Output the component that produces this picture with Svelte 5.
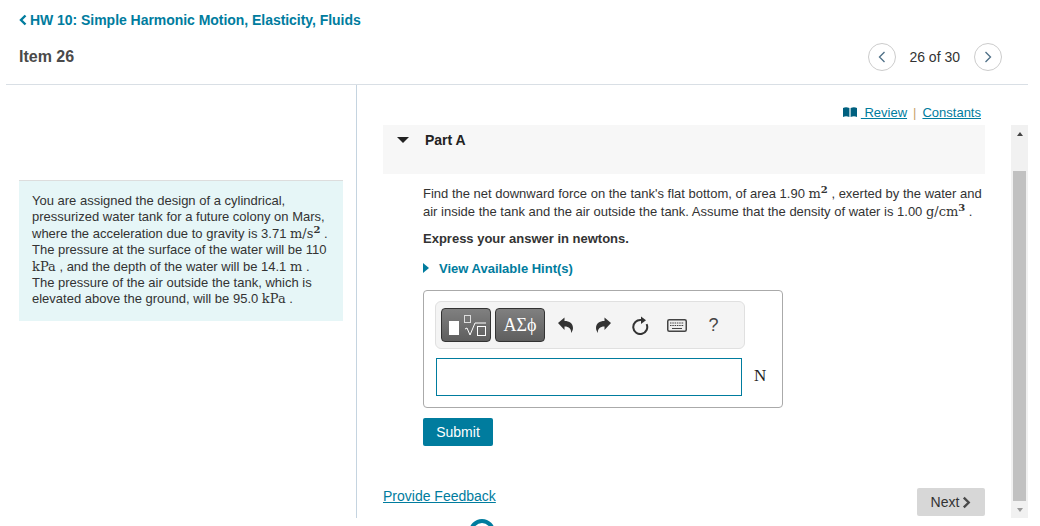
<script lang="ts">
  const tools = ['undo', 'redo', 'reset', 'keyboard'];
</script>

<div class="page">
  <header class="top">
    <a class="crumb" href="#top">
      <svg class="crumb-icon" viewBox="0 0 9 12" width="9" height="12"><path d="M7.500 1.500 3 6l4.500 4.500" fill="none" stroke="currentColor" stroke-width="2.400" /></svg>
      <span>HW 10: Simple Harmonic Motion, Elasticity, Fluids</span>
    </a>
    <div class="item-row">
      <h1>Item 26</h1>
      <div class="pager">
        <button class="round" aria-label="Previous">
          <svg viewBox="0 0 12 16" width="10" height="14"><path d="M9 2 3 8l6 6" fill="none" stroke="#4f7087" stroke-width="1.600" /></svg>
        </button>
        <span>26 of 30</span>
        <button class="round" aria-label="Next item">
          <svg viewBox="0 0 12 16" width="10" height="14"><path d="m3 2 6 6-6 6" fill="none" stroke="#4f7087" stroke-width="1.600" /></svg>
        </button>
      </div>
    </div>
  </header>

  <main class="split">
    <aside class="left">
      <div class="intro">
        You are assigned the design of a cylindrical,<br />
        pressurized water tank for a future colony on Mars,<br />
        where the acceleration due to gravity is 3.71 <span class="m">m/s<sup>2</sup></span> .<br />
        The pressure at the surface of the water will be 110<br />
        <span class="m">kPa</span> , and the depth of the water will be 14.1 <span class="m">m</span> .<br />
        The pressure of the air outside the tank, which is<br />
        elevated above the ground, will be 95.0 <span class="m">kPa</span> .
      </div>
    </aside>

    <section class="right">
      <div class="links">
        <svg viewBox="0 0 14 10" width="14" height="10"><path d="M0 1c2-1 4-1 6.400 0v9C4 9 2 9 0 10zM7.600 1C10 0 12 0 14 1v9c-2-1-4-1-6.400 0z" fill="#00607f" /></svg>
        <a href="#review">&nbsp;Review</a>
        <span class="sep">|</span>
        <a href="#constants">Constants</a>
      </div>

      <div class="pane">
        <div class="content">
          <div class="part-head">
            <span class="tri-down"></span>
            <strong>Part A</strong>
          </div>

          <div class="body">
            <p class="question">
              Find the net downward force on the tank's flat bottom, of area 1.90 <span class="m">m<sup>2</sup></span> , exerted by the water and<br />
              air inside the tank and the air outside the tank. Assume that the density of water is 1.00 <span class="m">g/cm<sup>3</sup></span> .
            </p>
            <p class="express">Express your answer in newtons.</p>
            <a class="hint" href="#hint"><span class="tri-right"></span>View Available Hint(s)</a>

            <div class="answer">
              <div class="toolbar">
                <button class="tpl" aria-label="Templates">
                  <svg viewBox="0 0 50 34" width="50" height="34">
                    <rect x="8" y="13" width="10" height="14" fill="#fff" />
                    <rect x="23.500" y="7.500" width="6" height="7" fill="none" stroke="#ddd" />
                    <path d="M24 21l2-1 3 7 5-12h11" fill="none" stroke="#fff" />
                    <rect x="36.500" y="18.500" width="8" height="9" fill="none" stroke="#fff" />
                  </svg>
                </button>
                <button class="tpl greek">ΑΣϕ</button>
                <div class="tools">
                  {#each tools as t}
                    <span class="tool">
                      {#if t === 'undo'}
                        <svg viewBox="0 0 16 17" width="16" height="17"><path d="M0 6 6.500.5v3.600c5 0 8.500 2.500 8.500 7 0 2-1 3.900-2 4.900.6-4-2-6.500-6.500-6.500v3.500z" fill="#333" /></svg>
                      {:else if t === 'redo'}
                        <svg viewBox="0 0 16 17" width="16" height="17"><path d="M16 6 9.500.5v3.600c-5 0-8.500 2.500-8.500 7 0 2 1 3.900 2 4.900-.6-4 2-6.500 6.500-6.500v3.500z" fill="#333" /></svg>
                      {:else if t === 'reset'}
                        <svg viewBox="0 0 18 19" width="18" height="19"><path d="M10 4.100a7 7 0 1 0 5.600 4" fill="none" stroke="#333" stroke-width="2" /><path d="M10 .5v7.500l5-3.700z" fill="#333" /></svg>
                      {:else}
                        <svg viewBox="0 0 20 13" width="20" height="13"><rect x=".75" y=".75" width="18.500" height="11.500" rx="1.500" fill="#eee" stroke="#444" stroke-width="1.500" /><path d="M3 4h14M3 6.500h14" stroke="#444" stroke-dasharray="1.500 .8" /><path d="M5 9.500h10" stroke="#444" /></svg>
                      {/if}
                    </span>
                  {/each}
                  <span class="tool help">?</span>
                </div>
              </div>
              <div class="entry">
                <input type="text" aria-label="Answer" />
                <span class="unit">N</span>
              </div>
            </div>

            <button class="submit">Submit</button>
          </div>

          <div class="foot">
            <a class="feedback" href="#feedback">Provide Feedback</a>
            <button class="next">Next <svg viewBox="0 0 10 14" width="9" height="13"><path d="M2 1.500 7.500 7 2 12.500" fill="none" stroke="#4a4a4a" stroke-width="2.600" /></svg></button>
          </div>
        </div>

        <div class="scrollbar">
          <span class="arrow-up"></span>
          <span class="thumb"></span>
          <span class="arrow-down"></span>
        </div>
      </div>
    </section>
  </main>

  <span class="fab"></span>
</div>

<style>
  :global(body) { margin: 0; background: #fff; overflow: hidden; }

  .page {
    position: relative;
    width: 1040px;
    height: 526px;
    overflow: hidden;
    font-family: "Liberation Sans", Arial, sans-serif;
    font-size: 14px;
    color: #333;
  }

  a { color: #007c9e; }

  .top { padding: 0 12px 0 6px; }
  .crumb {
    display: flex;
    align-items: center;
    height: 40px;
    padding-left: 12px;
    font-weight: 700;
    letter-spacing: -.04px;
    text-decoration: none;
  }
  .crumb-icon { margin-right: 3px; }

  .item-row {
    display: flex;
    align-items: center;
    justify-content: space-between;
    height: 32px;
    padding: 0 26px 12px 13px;
    border-bottom: 1px solid #d9dfe5;
  }
  h1 { margin: 1px 0 0; font-size: 16px; font-weight: 700; color: #4a4a4a; }

  .pager { display: flex; align-items: center; gap: 13px; margin-top: 2px; }
  .round {
    display: flex;
    align-items: center;
    justify-content: center;
    width: 28px;
    height: 28px;
    padding: 0;
    background: #fff;
    border: 1px solid #ccc;
    border-radius: 50%;
  }
  .pager span { margin-right: 1px; }

  .split { display: flex; height: 433px; padding-left: 6px; }

  .left { width: 350px; border-right: 1px solid #c5d4e0; padding-top: 95px; }
  .intro {
    width: 311px;
    height: 128px;
    margin-left: 13px;
    padding: 12px 0 0 13px;
    background: #e6f6f7;
    border-top: 1px solid #ddd;
    line-height: 16.400px;
    font-size: 13px;
  }

  .m { font-family: "DejaVu Serif", serif; font-size: 13px; }
  sup { font-size: 10px; font-weight: 700; line-height: 0; }

  .right { flex: 1; padding-left: 26px; padding-right: 12px; }
  .links {
    display: flex;
    justify-content: flex-end;
    align-items: center;
    gap: 4px;
    height: 40px;
    padding: 14px 47px 0 0;
    box-sizing: border-box;
    font-size: 13px;
  }
  .sep { color: #c9a26c; margin: 0 2px; }

  .pane { display: flex; height: 393px; }
  .content { display: flex; flex-direction: column; width: 602px; margin-right: 26px; }

  .part-head {
    display: flex;
    align-items: flex-start;
    gap: 16px;
    flex: none;
    height: 49px;
    padding: 7px 0 0 14px;
    box-sizing: border-box;
    background: #f7f7f7;
    color: #222;
  }
  .tri-down {
    margin-top: 5px;
    border-left: 6px solid transparent;
    border-right: 6px solid transparent;
    border-top: 6px solid #222;
  }

  .body { padding-left: 40px; }
  .question { margin: 11px 0 0; line-height: 18px; font-size: 13px; white-space: nowrap; }
  .express { margin: 10px 0 0; font-size: 13px; font-weight: 700; }
  .hint { display: block; margin-top: 15px; font-size: 13px; font-weight: 700; text-decoration: none; }
  .tri-right {
    display: inline-block;
    margin-right: 10px;
    border-top: 5px solid transparent;
    border-bottom: 5px solid transparent;
    border-left: 6px solid #007c9e;
  }

  .answer {
    width: 347px;
    height: 106px;
    margin-top: 14px;
    padding: 10px 0 0 11px;
    border: 1px solid #aaa;
    border-radius: 4px;
  }
  .toolbar {
    display: flex;
    align-items: center;
    gap: 4px;
    width: 298px;
    height: 46px;
    padding: 0 5px;
    background: #f4f4f4;
    border: 1px solid #e0e0e0;
    border-radius: 6px;
  }
  .tpl {
    width: 50px;
    height: 34px;
    padding: 0;
    background: linear-gradient(#808080, #5e5e5e);
    border: 1px solid #333;
    border-radius: 4px;
    color: #fff;
    font-family: "Liberation Serif", serif;
    font-size: 18px;
    overflow: hidden;
  }
  .tpl svg { display: block; margin: -1px; }
  .tools { display: flex; align-items: center; margin-left: -2px; }
  .tool { display: flex; justify-content: center; align-items: center; width: 37px; }
  .help { font-size: 18px; color: #444; }

  .entry { display: flex; align-items: center; margin: 9px 0 0 1px; }
  input {
    width: 306px;
    height: 38px;
    padding: 0;
    box-sizing: border-box;
    border: 1px solid #007c9e;
    background: #fff;
  }
  .unit { margin: 0 0 2px 12px; font-family: "Liberation Serif", serif; font-size: 17px; color: #222; }

  .submit {
    display: block;
    width: 70px;
    height: 28px;
    margin-top: 10px;
    padding: 0;
    background: #007c9e;
    border: none;
    border-radius: 2px;
    color: #fff;
    font: inherit;
  }

  .foot { display: flex; justify-content: space-between; align-items: flex-start; height: 30px; margin-top: auto; }
  .next {
    display: flex;
    align-items: center;
    justify-content: center;
    gap: 3px;
    width: 68px;
    height: 28px;
    padding: 0;
    background: #d7d7d7;
    border: none;
    border-radius: 2px;
    color: #333;
    font: inherit;
  }

  .scrollbar {
    display: flex;
    flex-direction: column;
    align-items: center;
    width: 17px;
    background: #f1f1f1;
  }
  .arrow-up {
    margin: 7px 0 8px;
    border-left: 3.500px solid transparent;
    border-right: 3.500px solid transparent;
    border-bottom: 4px solid #444;
  }
  .thumb { width: 13px; height: 330px; margin-top: 27px; background: #c1c1c1; }
  .arrow-down {
    margin-top: 7px;
    border-left: 3.500px solid transparent;
    border-right: 3.500px solid transparent;
    border-top: 4px solid #999;
  }

  .fab {
    position: absolute;
    left: 469px;
    top: 519px;
    width: 26px;
    height: 26px;
    box-sizing: border-box;
    border: 4px solid #007c9e;
    border-radius: 50%;
  }
</style>
